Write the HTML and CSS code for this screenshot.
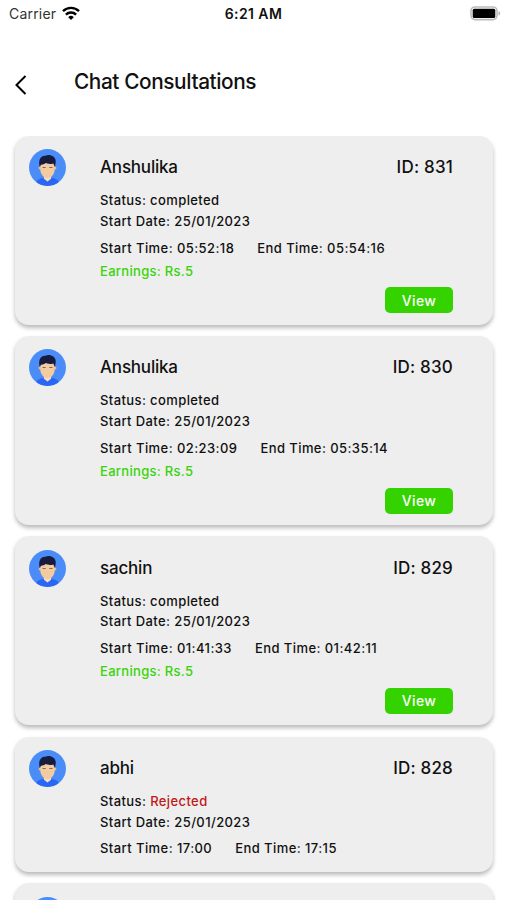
FILE: index.html
```html
<!DOCTYPE html>
<html lang="en">
<head>
    <meta charset="UTF-8">
    <meta name="viewport" content="width=device-width, initial-scale=1.0">
    <title>Chat Consultations</title>
    <link rel="stylesheet" href="styles.css">
</head>
<body>
    <svg width="0" height="0" class="defs">
        <symbol id="avatar" viewBox="0 0 36 36">
            <circle cx="18" cy="18" r="18" fill="#4b8df8"/>
            <path d="M7 32.200c1-2.700 4-3.500 7-4.200h8c3 .7 6 1.500 7 4.200a18 18 0 0 1-22 0z" fill="#2a66f6"/>
            <path d="M14.500 25h7v4l-3.500 2.500-3.500-2.500z" fill="#f8dcc0"/>
            <circle cx="10.800" cy="18.500" r="1.500" fill="#e9b88c"/>
            <circle cx="25.200" cy="18.500" r="1.500" fill="#e9b88c"/>
            <path d="M11 12h14v8c0 4.500-3.500 8.500-7 8.500s-7-4-7-8.500z" fill="#f3cba0"/>
            <path d="M10.500 17.500C8.600 10.500 11.500 6.200 16 6.500c4-1.700 10.500.5 10 6.500l-.7 4.500-1.700-3.500c-3 1.200-6 .2-7.600-.3-1.500 2-4 1.200-4.500 1.900z" fill="#171c3f"/>
            <path d="M13.200 18h3M19.800 18h3" stroke="#8a6253" stroke-width="1.100"/>
        </symbol>
    </svg>

    <div class="status-bar">
        <div class="carrier">
            <span>Carrier</span>
            <svg width="18" height="14" viewBox="0 0 18 14" fill="none" stroke="#000" stroke-width="2.400">
                <path d="M1 5.200a11.400 11.400 0 0 1 16 0"/>
                <path d="M3.900 8.600a7.300 7.300 0 0 1 10.200 0"/>
                <path d="M9 14L6.200 11.200a4 4 0 0 1 5.600 0z" fill="#000" stroke="none"/>
            </svg>
        </div>
        <div class="clock">6:21 AM</div>
        <svg class="battery" width="31" height="15" viewBox="0 0 31 15">
            <rect x="1" y="1" width="26" height="12.600" rx="4" fill="#fff" stroke="#bbb" stroke-width="1.600"/>
            <rect x="2.700" y="2.700" width="22.600" height="9.200" rx="1.500" fill="#000"/>
            <path d="M28.500 5c2.300.8 2.300 3.800 0 4.600z" fill="#b4b4b4"/>
        </svg>
    </div>

    <div class="header">
        <svg class="back" width="14" height="22" viewBox="0 0 14 22" fill="none" stroke="#000" stroke-width="2">
            <path d="M11.500 2L2.500 11l9 9"/>
        </svg>
        <h1>Chat Consultations</h1>
    </div>

    <div class="list">
        <div class="card">
            <svg class="avatar"><use href="#avatar"/></svg>
            <div class="info">
                <div class="top"><span>Anshulika</span><span class="id">ID: 831</span></div>
                <div class="line">Status: completed</div>
                <div class="line">Start Date: 25/01/2023</div>
                <div class="times"><span>Start Time: 05:52:18</span><span>End Time: 05:54:16</span></div>
                <div class="earnings">Earnings: Rs.5</div>
                <button class="view">View</button>
            </div>
        </div>

        <div class="card">
            <svg class="avatar"><use href="#avatar"/></svg>
            <div class="info">
                <div class="top"><span>Anshulika</span><span class="id">ID: 830</span></div>
                <div class="line">Status: completed</div>
                <div class="line">Start Date: 25/01/2023</div>
                <div class="times"><span>Start Time: 02:23:09</span><span>End Time: 05:35:14</span></div>
                <div class="earnings">Earnings: Rs.5</div>
                <button class="view">View</button>
            </div>
        </div>

        <div class="card">
            <svg class="avatar"><use href="#avatar"/></svg>
            <div class="info">
                <div class="top"><span>sachin</span><span class="id">ID: 829</span></div>
                <div class="line">Status: completed</div>
                <div class="line">Start Date: 25/01/2023</div>
                <div class="times"><span>Start Time: 01:41:33</span><span>End Time: 01:42:11</span></div>
                <div class="earnings">Earnings: Rs.5</div>
                <button class="view">View</button>
            </div>
        </div>

        <div class="card">
            <svg class="avatar"><use href="#avatar"/></svg>
            <div class="info">
                <div class="top"><span>abhi</span><span class="id">ID: 828</span></div>
                <div class="line">Status: <span class="rejected">Rejected</span></div>
                <div class="line">Start Date: 25/01/2023</div>
                <div class="times"><span>Start Time: 17:00</span><span>End Time: 17:15</span></div>
            </div>
        </div>

        <div class="card">
            <svg class="avatar"><use href="#avatar"/></svg>
        </div>
    </div>
</body>
</html>
```
FILE: styles.css
```css
* {
    box-sizing: border-box;
}
body {
    margin: 0;
    height: 900px;
    overflow: hidden;
    display: flex;
    flex-direction: column;
    font-family: Inter, "Liberation Sans", sans-serif;
    background-color: white;
    color: #111;
}
.defs {
    display: block;
    flex: none;
    height: 0;
}
.status-bar {
    display: grid;
    grid-template-columns: 1fr auto 1fr;
    align-items: center;
    height: 27px;
    padding: 0 6px 0 8px;
    flex: none;
}
.carrier {
    display: flex;
    align-items: center;
    gap: 6px;
    padding-left: 1px;
    font-size: 14px;
    letter-spacing: 0.2px;
    color: #333;
}
.carrier svg {
    margin-top: -2px;
}
.clock {
    margin-right: 2px;
    font-size: 14px;
    font-weight: 600;
    letter-spacing: 0.4px;
}
.battery {
    justify-self: end;
}
.header {
    display: flex;
    align-items: center;
    height: 108.8px;
    padding: 0 14px;
    flex: none;
}
.back {
    margin: 7px 46px 0 0;
}
h1 {
    margin: 0;
    font-size: 20.8px;
    font-weight: 500;
    letter-spacing: -0.4px;
}
.list {
    flex: 1;
    min-height: 0;
    overflow: hidden;
    display: flex;
    flex-direction: column;
    gap: 11.4px;
    padding: 0 14px 0 15px;
}
.card {
    display: flex;
    flex: none;
    gap: 34px;
    min-height: 135px;
    padding: 13.3px 40px 11.4px 14px;
    background-color: #eee;
    border-radius: 14px;
    box-shadow: 0 3px 4px rgba(0, 0, 0, 0.27);
}
.avatar {
    width: 37px;
    height: 37px;
    flex: none;
}
.info {
    flex: 1;
    display: flex;
    flex-direction: column;
    font-size: 13px;
    font-weight: 500;
    letter-spacing: 0.4px;
}
.top {
    display: flex;
    justify-content: space-between;
    height: 37px;
    margin-bottom: 4px;
    line-height: 37px;
    font-size: 17px;
    letter-spacing: -0.2px;
}
.id {
    letter-spacing: 0.2px;
}
.line {
    line-height: 20.8px;
}
.rejected {
    color: #c01818;
}
.times {
    display: flex;
    gap: 23px;
    margin-top: 4px;
    line-height: 24px;
    letter-spacing: 0.43px;
}
.earnings {
    line-height: 23px;
    letter-spacing: 0.3px;
    color: #38d30a;
}
.view {
    align-self: flex-end;
    width: 68px;
    height: 26px;
    margin-top: 4.6px;
    padding: 0;
    border: none;
    border-radius: 5px;
    background-color: #34d300;
    color: white;
    font: 500 14px Inter, "Liberation Sans", sans-serif;
    letter-spacing: 0.3px;
}
```
